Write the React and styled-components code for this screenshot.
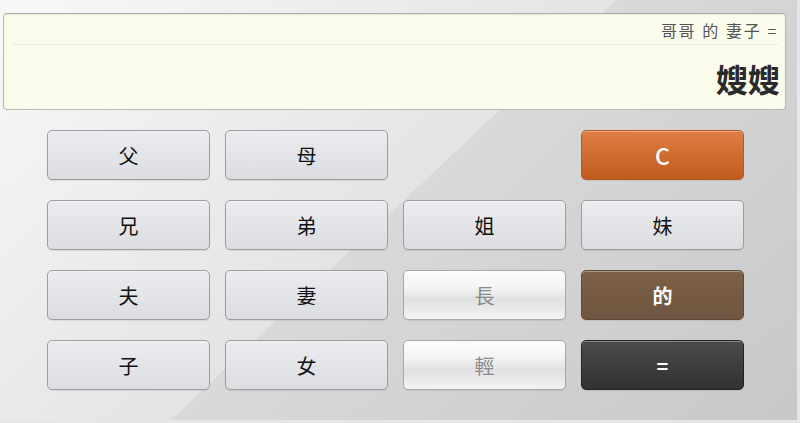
import React from "react";
import styled, { createGlobalStyle } from "styled-components";

const GlobalStyle = createGlobalStyle`
    html, body {
        margin: 0;
        padding: 0;
        background: #e6e6e6;
    }
    body {
        font-family: "Noto Sans CJK TC", "Noto Sans", sans-serif;
    }
`;

const keys = [
    [{ label: "父" }, { label: "母" }, null, { label: "C", kind: "clear" }],
    [{ label: "兄" }, { label: "弟" }, { label: "姐" }, { label: "妹" }],
    [{ label: "夫" }, { label: "妻" }, { label: "長", kind: "light" }, { label: "的", kind: "of" }],
    [{ label: "子" }, { label: "女" }, { label: "輕", kind: "light" }, { label: "=", kind: "equals" }],
];

function App() {
    return (
        <>
            <GlobalStyle />
            <Calculator>
                <Display>
                    <Expression>哥哥 的 妻子 =</Expression>
                    <Result>嫂嫂</Result>
                </Display>
                <Keypad>
                    {keys.flat().map((key, i) =>
                        key ? (
                            <Key key={i} kind={key.kind}>
                                {key.label}
                            </Key>
                        ) : (
                            <Blank key={i} />
                        )
                    )}
                </Keypad>
            </Calculator>
        </>
    );
}

const Calculator = styled.div`
    width: 797px;
    height: 420px;
    box-sizing: border-box;
    padding: 13px 11px 0 3px;
    background: linear-gradient(
        136.7deg,
        #f8f8f8 0%,
        #e4e4e4 49.6%,
        #d9d9d9 49.6%,
        #c8c8c8 100%
    );
    overflow: hidden;
`;

const Display = styled.div`
    height: 97px;
    box-sizing: border-box;
    padding: 0 7px 0 9px;
    background: #fcfcec;
    border: 1px solid #b9b9b3;
    border-top-color: #aaa;
    border-radius: 4px;
    box-shadow: inset 0 1px 2px rgba(0, 0, 0, 0.08);
    display: flex;
    flex-direction: column;
`;

const Expression = styled.div`
    height: 31px;
    box-sizing: border-box;
    padding-top: 6px;
    border-bottom: 1px solid #ebebdc;
    text-align: right;
    font-size: 16px;
    line-height: 20px;
    color: #555;
    letter-spacing: 1.6px;
    word-spacing: 1px;
`;

const Result = styled.div`
    flex: 1;
    display: flex;
    align-items: center;
    justify-content: flex-end;
    font-size: 32px;
    font-weight: 700;
    color: #2a2a2a;
    padding: 2px 0 0 0;
    margin-right: -2px;
`;

const Keypad = styled.div`
    display: grid;
    grid-template-columns: repeat(4, 163px);
    grid-auto-rows: 50px;
    column-gap: 15px;
    row-gap: 20px;
    margin: 20px 0 0 44px;
`;

const Blank = styled.div``;

const palette = {
    default: {
        bg: "linear-gradient(#ebecef, #dcdde1)",
        border: "#9d9d9f",
        color: "#111",
        weight: 400,
    },
    light: {
        bg: "linear-gradient(#fcfcfc 0%, #f4f4f4 35%, #e0e0e2 60%, #f3f3f3 100%)",
        border: "#a8a8a8",
        color: "#8a8a8a",
        weight: 400,
    },
    clear: {
        bg: "linear-gradient(#df7e44, #c05b1d)",
        border: "#b05a28",
        color: "#fff",
        weight: 500,
    },
    of: {
        bg: "linear-gradient(#7d6148, #705540)",
        border: "#5e4a38",
        color: "#fff",
        weight: 700,
    },
    equals: {
        bg: "linear-gradient(#4a4a4a, #323232)",
        border: "#222",
        color: "#fff",
        weight: 700,
    },
};

const Key = styled.button`
    box-sizing: border-box;
    border: 1px solid ${(props) => palette[props.kind || "default"].border};
    border-radius: 5px;
    background: ${(props) => palette[props.kind || "default"].bg};
    color: ${(props) => palette[props.kind || "default"].color};
    font-family: "Noto Sans CJK TC", "Noto Sans", sans-serif;
    font-size: ${(props) => (props.kind === "clear" ? "23px" : "20px")};
    font-weight: ${(props) => palette[props.kind || "default"].weight};
    box-shadow: inset 0 1px 0 rgba(255, 255, 255, 0.35), 0 1px 1px rgba(0, 0, 0, 0.08);
    padding: 0;
    cursor: pointer;
`;

export default App;
